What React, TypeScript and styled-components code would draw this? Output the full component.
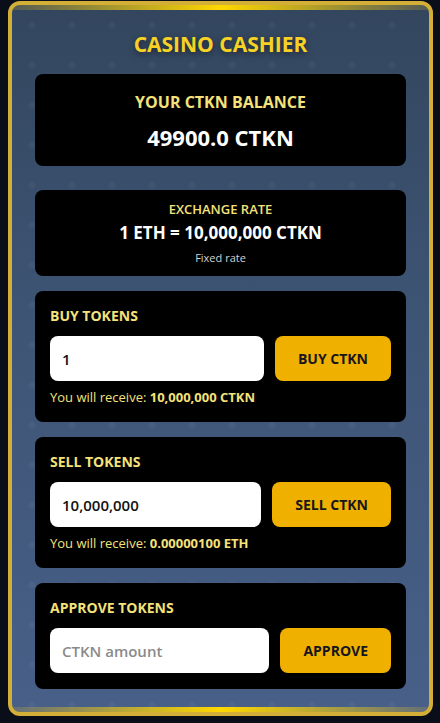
import React from 'react';
import styled, { createGlobalStyle } from 'styled-components';

const GlobalStyle = createGlobalStyle`
  html, body {
    margin: 0;
    padding: 0;
    background: #0a0e19;
  }
  body {
    font-family: 'Trebuchet MS', 'Open Sans', sans-serif;
  }
`;

const Page = styled.div`
  padding: 1px 7px 7px 8px;
  min-height: 723px;
  box-sizing: border-box;
`;

const Cashier = styled.div`
  position: relative;
  border: 4px solid #d4af37;
  border-radius: 12px;
  padding: 26px 23px 23px;
  overflow: hidden;
  background-color: #3b5070;
  background-image:
    radial-gradient(circle, rgba(255, 255, 255, 0.035) 3px, transparent 4px),
    linear-gradient(180deg, #33465e 0%, #3f5677 50%, #485f88 100%);
  background-size: 40px 40px, 100% 100%;

  &::before,
  &::after {
    content: '';
    position: absolute;
    left: 0;
    right: 0;
    height: 5px;
    background: linear-gradient(90deg, rgba(212, 175, 55, 0.2), #ffd700 50%, rgba(212, 175, 55, 0.2));
  }
  &::before { top: 0; }
  &::after { bottom: 0; }
`;

const Title = styled.h1`
  margin: 0 0 17px;
  font-size: 21px;
  line-height: 26px;
  font-weight: 700;
  text-align: center;
  color: #f7d225;
  text-shadow: 0 2px 6px rgba(0, 0, 0, 0.5);
`;

const Panel = styled.div<{ $gap?: number }>`
  background: #000;
  border-radius: 8px;
  padding: 16px 15px;
  margin-bottom: ${p => p.$gap ?? 15}px;
  &:last-child { margin-bottom: 0; }
`;

const BalancePanel = styled(Panel)`
  padding: 18px 15px 15px;
  text-align: center;
`;

const RatePanel = styled(Panel)`
  padding: 10px 15px 11px;
  text-align: center;
`;

const BalanceLabel = styled.div`
  font-size: 16px;
  line-height: 20px;
  font-weight: 700;
  color: #f4e27a;
  margin-bottom: 11px;
`;

const BalanceValue = styled.div`
  font-size: 22px;
  line-height: 28px;
  font-weight: 700;
  color: #fff;
`;

const RateLabel = styled.div`
  font-size: 13px;
  line-height: 18px;
  font-weight: 600;
  color: #f4e27a;
  margin-bottom: 4px;
`;

const RateValue = styled.div`
  font-size: 17px;
  line-height: 22px;
  font-weight: 700;
  color: #fff;
  margin-bottom: 7px;
`;

const RateNote = styled.div`
  font-size: 11px;
  line-height: 14px;
  color: #d2d2d2;
`;

const SectionTitle = styled.div`
  font-size: 14px;
  line-height: 18px;
  font-weight: 700;
  color: #f4e27a;
  margin-bottom: 11px;
`;

const Row = styled.div`
  display: flex;
  gap: 11px;
`;

const Input = styled.input`
  flex: 1;
  min-width: 0;
  height: 45px;
  box-sizing: border-box;
  border: none;
  border-radius: 8px;
  background: #fff;
  padding: 0 12px;
  font-family: inherit;
  font-size: 15px;
  font-weight: 600;
  color: #111;
  outline: none;

  &::placeholder {
    color: #8a8a8a;
    font-weight: 600;
  }
`;

const Button = styled.button`
  height: 45px;
  border: none;
  border-radius: 8px;
  background: #f0b000;
  color: #16161e;
  padding: 0 23px;
  font-family: inherit;
  font-size: 14px;
  font-weight: 700;
  cursor: pointer;
`;

const Receive = styled.div`
  margin-top: 8px;
  font-size: 13px;
  line-height: 17px;
  color: #f4e27a;

  strong {
    font-weight: 700;
  }
`;

const App: React.FC = () => {
  return (
    <>
      <GlobalStyle />
      <Page>
        <Cashier>
          <Title>CASINO CASHIER</Title>

          <BalancePanel $gap={24}>
            <BalanceLabel>YOUR CTKN BALANCE</BalanceLabel>
            <BalanceValue>49900.0 CTKN</BalanceValue>
          </BalancePanel>

          <RatePanel>
            <RateLabel>EXCHANGE RATE</RateLabel>
            <RateValue>1 ETH = 10,000,000 CTKN</RateValue>
            <RateNote>Fixed rate</RateNote>
          </RatePanel>

          <Panel>
            <SectionTitle>BUY TOKENS</SectionTitle>
            <Row>
              <Input defaultValue="1" />
              <Button>BUY CTKN</Button>
            </Row>
            <Receive>
              You will receive: <strong>10,000,000 CTKN</strong>
            </Receive>
          </Panel>

          <Panel>
            <SectionTitle>SELL TOKENS</SectionTitle>
            <Row>
              <Input defaultValue="10,000,000" />
              <Button>SELL CTKN</Button>
            </Row>
            <Receive>
              You will receive: <strong>0.00000100 ETH</strong>
            </Receive>
          </Panel>

          <Panel>
            <SectionTitle>APPROVE TOKENS</SectionTitle>
            <Row>
              <Input placeholder="CTKN amount" />
              <Button>APPROVE</Button>
            </Row>
          </Panel>
        </Cashier>
      </Page>
    </>
  );
};

export default App;
